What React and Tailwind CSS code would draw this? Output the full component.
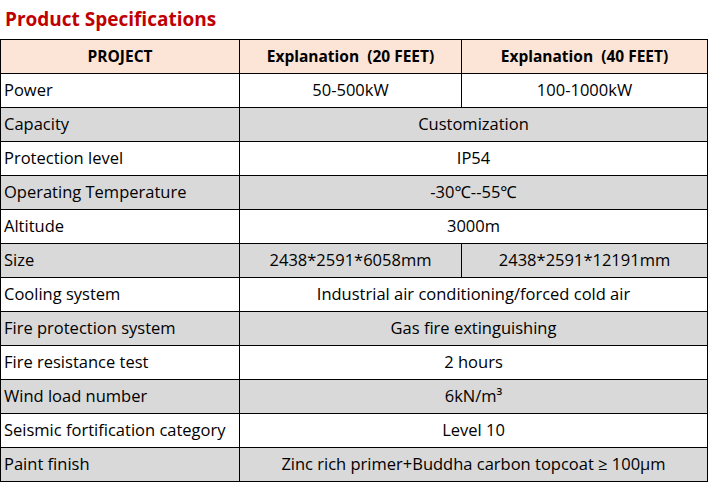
import React from "react";

const rows = [
  ["Power", "50-500kW", "100-1000kW"],
  ["Capacity", "Customization"],
  ["Protection level", "IP54"],
  ["Operating Temperature", "-30℃--55℃"],
  ["Altitude", "3000m"],
  ["Size", "2438*2591*6058mm", "2438*2591*12191mm"],
  ["Cooling system", "Industrial air conditioning/forced cold air"],
  ["Fire protection system", "Gas fire extinguishing"],
  ["Fire resistance test", "2 hours"],
  ["Wind load number", "6kN/m³"],
  ["Seismic fortification category", "Level 10"],
  ["Paint finish", "Zinc rich primer+Buddha carbon topcoat ≥ 100μm"],
];

export default function App() {
  return (
    <div
      className="w-[709px] h-[483px] bg-white text-black overflow-hidden"
      style={{ fontFamily: '"Open Sans", "Noto Sans", sans-serif' }}
    >
      <div className="h-[39px] pl-[5px] pt-[6px]">
        <h1 className="text-[19px] leading-[26px] font-bold text-[#c00000]">
          Product Specifications
        </h1>
      </div>
      <div className="w-[708px] border-l border-t border-black">
        <div className="grid grid-cols-[239px_222px_1fr] h-[34px] bg-[#fce4d6] text-[15.5px] font-bold">
          <div className="border-r border-b border-black flex items-center justify-center">PROJECT</div>
          <div className="border-r border-b border-black flex items-center justify-center">Explanation&nbsp;&nbsp;(20 FEET)</div>
          <div className="border-r border-b border-black flex items-center justify-center">Explanation&nbsp;&nbsp;(40 FEET)</div>
        </div>
        {rows.map((r, i) => (
          <div
            key={i}
            className={`grid grid-cols-[239px_222px_1fr] h-[34px] text-[16.5px] ${i % 2 === 1 ? "bg-[#d9d9d9]" : "bg-white"}`}
          >
            <div className="border-r border-b border-black flex items-center pl-[3px] whitespace-nowrap">{r[0]}</div>
            {r.length === 3 ? (
              <>
                <div className="border-r border-b border-black flex items-center justify-center whitespace-nowrap">{r[1]}</div>
                <div className="border-r border-b border-black flex items-center justify-center whitespace-nowrap">{r[2]}</div>
              </>
            ) : (
              <div className="col-span-2 border-r border-b border-black flex items-center justify-center whitespace-nowrap">{r[1]}</div>
            )}
          </div>
        ))}
      </div>
    </div>
  );
}
